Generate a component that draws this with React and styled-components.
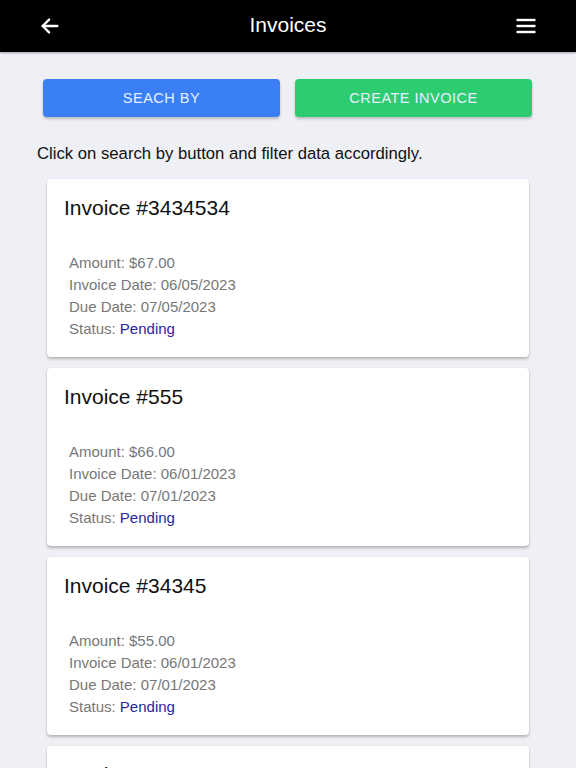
import React from "react";
import styled, { createGlobalStyle } from "styled-components";

const Global = createGlobalStyle`
  html, body { margin: 0; padding: 0; background: #eef0f5; }
  body { font-family: "Liberation Sans", Arial, sans-serif; }
  * { box-sizing: border-box; }
`;

const Page = styled.div`
  background: #eef0f5;
  overflow: hidden;
  height: 768px;
`;

const Header = styled.header`
  height: 52px;
  background: #000;
  display: flex;
  align-items: center;
  justify-content: space-between;
  padding: 0 38px 0 38px;
  box-shadow: 0 1px 2px rgba(0,0,0,0.35);
  position: relative;
`;

const IconButton = styled.button`
  background: none;
  border: none;
  padding: 0;
  width: 24px;
  height: 24px;
  display: flex;
  align-items: center;
  justify-content: center;
  cursor: pointer;
`;

const Title = styled.h1`
  margin: 0 0 2px 0;
  color: #fff;
  font-size: 21px;
  font-weight: 400;
  position: absolute;
  left: 0;
  right: 0;
  text-align: center;
  pointer-events: none;
`;

const ButtonRow = styled.div`
  display: grid;
  grid-template-columns: 1fr 1fr;
  gap: 15px;
  padding: 27px 44px 0 43px;
`;

const ActionButton = styled.button`
  height: 38px;
  border: none;
  border-radius: 4px;
  background: ${(p) => p.$bg};
  color: #e8f0ff;
  font-family: "Liberation Sans", Arial, sans-serif;
  font-size: 14.5px;
  letter-spacing: 0.5px;
  text-transform: uppercase;
  box-shadow: 0 2px 3px rgba(0,0,0,0.22);
  cursor: pointer;
`;

const Hint = styled.p`
  margin: 26px 0 0 37px;
  font-size: 16.7px;
  line-height: 21px;
  color: #111;
`;

const List = styled.div`
  display: flex;
  flex-direction: column;
  gap: 11px;
  padding: 15px 47px 0 47px;
`;

const Card = styled.div`
  background: #fff;
  border-radius: 4px;
  box-shadow: 0 2px 3px rgba(0,0,0,0.25), 0 0 1px rgba(0,0,0,0.08);
  padding: 17px 17px 17px 17px;
`;

const CardTitle = styled.h2`
  margin: 0;
  font-size: 21px;
  line-height: 24px;
  font-weight: 400;
  color: #111;
`;

const Details = styled.div`
  margin-top: 32px;
  padding-left: 5px;
  font-size: 15px;
  line-height: 22px;
  color: #777;
`;

const Status = styled.span`
  color: #27279a;
`;

const invoices = [
  { no: "3434534", amount: "$67.00", date: "06/05/2023", due: "07/05/2023", status: "Pending" },
  { no: "555", amount: "$66.00", date: "06/01/2023", due: "07/01/2023", status: "Pending" },
  { no: "34345", amount: "$55.00", date: "06/01/2023", due: "07/01/2023", status: "Pending" },
  { no: "123456", amount: "$50.00", date: "06/01/2023", due: "07/01/2023", status: "Pending" },
];

export default function App() {
  return (
    <Page>
      <Global />
      <Header>
        <IconButton aria-label="Back">
          <svg width="22" height="22" viewBox="0 0 24 24" fill="none" stroke="#fff" strokeWidth="2.6" strokeLinecap="round" strokeLinejoin="round">
            <path d="M20 12H4" />
            <path d="M11 5l-7 7 7 7" />
          </svg>
        </IconButton>
        <Title>Invoices</Title>
        <IconButton aria-label="Menu">
          <svg width="22" height="22" viewBox="0 0 22 22" fill="none" stroke="#fff" strokeWidth="2.4">
            <path d="M1.5 5h19" />
            <path d="M1.5 11h19" />
            <path d="M1.5 17h19" />
          </svg>
        </IconButton>
      </Header>
      <ButtonRow>
        <ActionButton $bg="#3b7ff6">Seach by</ActionButton>
        <ActionButton $bg="#2ecc71">Create invoice</ActionButton>
      </ButtonRow>
      <Hint>Click on search by button and filter data accordingly.</Hint>
      <List>
        {invoices.map((inv) => (
          <Card key={inv.no}>
            <CardTitle>Invoice #{inv.no}</CardTitle>
            <Details>
              <div>Amount: {inv.amount}</div>
              <div>Invoice Date: {inv.date}</div>
              <div>Due Date: {inv.due}</div>
              <div>
                Status: <Status>{inv.status}</Status>
              </div>
            </Details>
          </Card>
        ))}
      </List>
    </Page>
  );
}
